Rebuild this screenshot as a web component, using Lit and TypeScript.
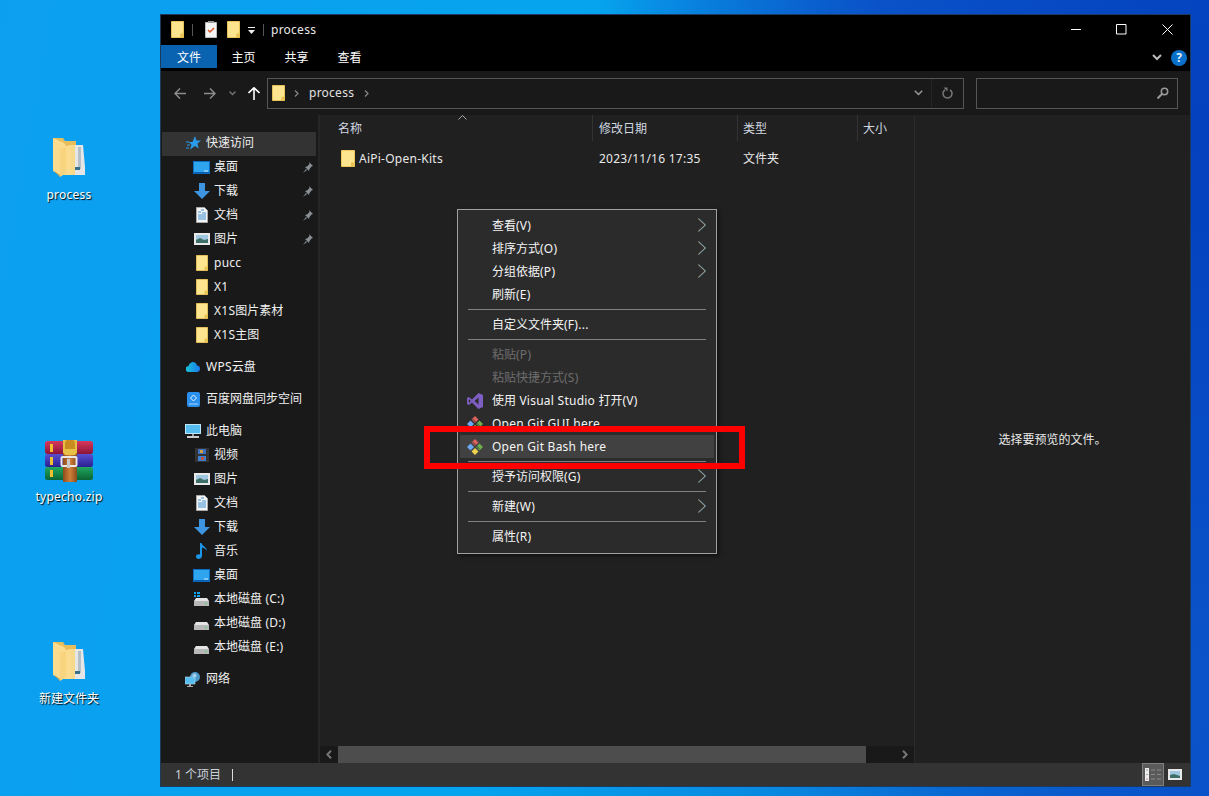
import { LitElement, css, html, svg } from "lit";
import { customElement } from "lit/decorators.js";

// Segoe UI runs a little wider than Noto Sans, so latin runs get some tracking
const t = (text: string) =>
  text
    .split(/([\x00-\x7f]+)/)
    .map((run, i) => (i % 2 ? html`<span class="lat">${run}</span>` : run));

const isLatin = (text: string) => /^[\x00-\x7f]+$/.test(text);

const folder = (w = 13, h = 17) => html`<svg width=${w} height=${h} viewBox="0 0 14 17" preserveAspectRatio="none">
  <path d="M.5.5h13v16H.5z" fill="#fde58f" stroke="#eec85a" />
  <path d="M10 12.5h3.5v4H10z" fill="#e8c14f" />
</svg>`;

const monitor = html`<svg width="17" height="13" viewBox="0 0 17 13">
  <rect width="16" height="12" x=".5" y=".5" fill="#2fa5f0" stroke="#0a6fc4" />
  <path d="M1 11h15v1.5H1z" fill="#0a5fb0" />
  <path d="M11 10h4" stroke="#cdeafb" />
</svg>`;

const download = html`<svg width="16" height="16" viewBox="0 0 16 16">
  <path d="M5 0h6v8h5l-8 8-8-8h5z" fill="#3d94e0" />
</svg>`;

const documentIcon = html`<svg width="12" height="16" viewBox="0 0 12 16">
  <path d="M.5.5h8l3 3v12H.5z" fill="#f4f4f4" stroke="#aaa" />
  <path d="M5 3h3M2 5h3M6 6h4M2 8h8M2 10h8M2 12h8" stroke="#3f8fd0" />
</svg>`;

const picture = html`<svg width="16" height="12" viewBox="0 0 16 12">
  <rect width="16" height="12" fill="#e9e9e9" />
  <rect width="12" height="8" x="2" y="2" fill="#9fc8e0" />
  <path d="M2 7l4-2 4 2 4-1v4H2z" fill="#3f6f68" />
</svg>`;

const pin = html`<svg width="10" height="11" viewBox="0 0 10 11">
  <path d="M6 0l4 4-1.500.6L6.500 7l-.5 2-4-4 2-.5L6.500 2z M3 7l-3 4 4-3z" fill="#8a8f94" />
</svg>`;

const video = html`<svg width="14" height="14" viewBox="0 0 14 14">
  <rect width="14" height="14" fill="#333" />
  <path d="M3 1h8v5H3z" fill="#3d6fc0" />
  <path d="M3 8h8v5H3z" fill="#3d80d0" />
  <path d="M5 2h3v3H5z" fill="#d0a040" />
  <path d="M6 9h3v3H6z" fill="#c05040" />
</svg>`;

const music = html`<svg width="12" height="16" viewBox="0 0 12 16">
  <path d="M4 0h1.500c.5 3 5.500 4 5.500 8-1-2-3-3-5-3.500V13c0 2-2 3-3.500 3S0 15 0 13.500 2 11 4 11.500z" fill="#1b96e8" />
</svg>`;

const drive = (win = false) => html`<svg width="15" height="14" viewBox="0 0 15 14">
  ${win
    ? svg`<path d="M0 0h2v2H0zM3 0h3v2H3zM0 3h2v2H0zM3 3h3v2H3z" fill="#12a5ee" />`
    : ""}
  <path d="M2 6h11l2 3H0z" fill="#e4e4e4" />
  <rect width="15" height="5" y="9" fill="#b8b8b8" />
  <path d="M11 11h2v1h-2z" fill="#4fdc5a" />
</svg>`;

const star = html`<svg width="15" height="14" viewBox="0 0 15 14">
  <path d="M9 0l1.500 4.500H15l-3.500 3 1.200 5L9 10l-5 3.500 1.500-5L2.500 6h4z" fill="#2a9be8" />
  <path d="M0 6h3M1 9h3M0 12h3" stroke="#2a9be8" />
</svg>`;

const cloud = html`<svg width="15" height="10" viewBox="0 0 15 10">
  <defs>
    <linearGradient id="wps" x1="0" x2="1">
      <stop offset="0" stop-color="#17c5d8" />
      <stop offset="1" stop-color="#1a78ea" />
    </linearGradient>
  </defs>
  <path d="M3 10a3 3 0 0 1-.500-6C3.500 1 5.500 0 7 0c2 0 3.500 1.500 4 3.500a3.300 3.300 0 0 1 .5 6.500z" fill="url(#wps)" />
</svg>`;

const baidu = html`<svg width="13" height="15" viewBox="0 0 13 15">
  <rect width="13" height="15" rx="2" fill="#2a90ee" />
  <path d="M6.500 3l3 3-3 3-3-3z" fill="none" stroke="#e6f4ff" />
  <path d="M2 12h9" stroke="#a8d6ff" />
</svg>`;

const pc = html`<svg width="16" height="15" viewBox="0 0 16 15">
  <rect width="16" height="10" fill="#bfe6f8" />
  <rect width="14" height="8" x="1" y="1" fill="#56bdf0" />
  <path d="M7 10h2v2H7z" fill="#999" />
  <path d="M2 12h12v2H2z" fill="#ccc" />
</svg>`;

const network = html`<svg width="16" height="15" viewBox="0 0 16 15">
  <circle cx="10" cy="5" r="5" fill="#4b97c9" />
  <path d="M7 3l3-2 2 3-3 2z" fill="#9fd0ec" />
  <rect width="10" height="7" y="5" fill="#56bdf0" stroke="#b8d8e8" stroke-width=".6" />
  <path d="M4 12h2v2H4zM2 14h6v1H2z" fill="#aaa" />
</svg>`;

const vs = html`<svg width="16" height="16" viewBox="0 0 16 16">
  <path d="M11.500 0L16 2v12l-4.500 2L5 9.500 1.800 12 0 11V5l1.800-1L5 6.500zM11.500 4.500L7.500 8l4 3.500zM1.800 6v4L3.800 8z" fill="#7f5ec4" />
</svg>`;

const git = html`<svg width="16" height="16" viewBox="0 0 16 16">
  <path d="M8 0l3.500 3.500L8 7 4.500 3.500z" fill="#e0605a" />
  <path d="M3.500 4.500L7 8l-3.500 3.500L0 8z" fill="#6da8f2" />
  <path d="M12.500 4.500L16 8l-3.500 3.500L9 8z" fill="#6cb04c" />
  <path d="M8 9l3.500 3.500L8 16l-3.500-3.500z" fill="#f0d050" />
  <path d="M5.500 3l7 7" stroke="#3c3c3c" />
</svg>`;

const submenuArrow = html`<svg class="sub" width="10" height="14" viewBox="0 0 10 14">
  <path d="M1 .5L8 7l-7 6.500" fill="none" stroke="#e8a060" stroke-width=".7" />
  <path d="M1.700 .5L8.700 7l-7 6.500" fill="none" stroke="#70c4f4" stroke-width=".7" />
</svg>`;

const navGroups = [
  [
    { icon: star, label: "快速访问", top: true, active: true },
    { icon: monitor, label: "桌面", pinned: true },
    { icon: download, label: "下载", pinned: true },
    { icon: documentIcon, label: "文档", pinned: true },
    { icon: picture, label: "图片", pinned: true },
    { icon: folder(12, 16), label: "pucc" },
    { icon: folder(12, 16), label: "X1" },
    { icon: folder(12, 16), label: "X1S图片素材" },
    { icon: folder(12, 16), label: "X1S主图" },
  ],
  [{ icon: cloud, label: "WPS云盘", top: true }],
  [{ icon: baidu, label: "百度网盘同步空间", top: true }],
  [
    { icon: pc, label: "此电脑", top: true },
    { icon: video, label: "视频" },
    { icon: picture, label: "图片" },
    { icon: documentIcon, label: "文档" },
    { icon: download, label: "下载" },
    { icon: music, label: "音乐" },
    { icon: monitor, label: "桌面" },
    { icon: drive(true), label: "本地磁盘 (C:)" },
    { icon: drive(), label: "本地磁盘 (D:)" },
    { icon: drive(), label: "本地磁盘 (E:)" },
  ],
  [{ icon: network, label: "网络", top: true }],
];

type MenuEntry =
  | "sep"
  | { label: string; sub?: boolean; off?: boolean; icon?: unknown; on?: boolean };

const menu: MenuEntry[] = [
  { label: "查看(V)", sub: true },
  { label: "排序方式(O)", sub: true },
  { label: "分组依据(P)", sub: true },
  { label: "刷新(E)" },
  "sep",
  { label: "自定义文件夹(F)..." },
  "sep",
  { label: "粘贴(P)", off: true },
  { label: "粘贴快捷方式(S)", off: true },
  { label: "使用 Visual Studio 打开(V)", icon: vs },
  { label: "Open Git GUI here", icon: git },
  { label: "Open Git Bash here", icon: git, on: true },
  "sep",
  { label: "授予访问权限(G)", sub: true },
  "sep",
  { label: "新建(W)", sub: true },
  "sep",
  { label: "属性(R)" },
];

const bigFolder = html`<svg width="34" height="46" viewBox="0 0 34 46">
  <path d="M1 1h10l2 3h11v30H1z" fill="#e8bd5c" />
  <path d="M22 8h9l2 22v8H22z" fill="#e6e6e6" />
  <path d="M26 10h3v22h-3z" fill="#b4c0c4" />
  <path d="M22 30h6v3h-6z" fill="#36708a" />
  <path d="M19 8h4v30h-4z" fill="#f6d98a" />
  <path d="M1 1l11 5 2 3 5-1v30H8l-7-4z" fill="#fbdc8e" />
  <path d="M1 33l7 7V38z" fill="#d8a848" />
  <path d="M8 12v28l6-4V10z" fill="#f9d47e" />
</svg>`;

const rar = html`<svg width="48" height="42" viewBox="0 0 48 42">
  <defs>
    <linearGradient id="rr" x1="0" x2="0" y1="0" y2="1">
      <stop offset="0" stop-color="#d83a5c" />
      <stop offset="1" stop-color="#8c1438" />
    </linearGradient>
    <linearGradient id="rb" x1="0" x2="0" y1="0" y2="1">
      <stop offset="0" stop-color="#5a50d0" />
      <stop offset="1" stop-color="#2a2090" />
    </linearGradient>
    <linearGradient id="rg" x1="0" x2="0" y1="0" y2="1">
      <stop offset="0" stop-color="#20a860" />
      <stop offset="1" stop-color="#0a6434" />
    </linearGradient>
    <linearGradient id="rbelt" x1="0" x2="1">
      <stop offset="0" stop-color="#8c4c1c" />
      <stop offset=".5" stop-color="#d08038" />
      <stop offset="1" stop-color="#8c4c1c" />
    </linearGradient>
  </defs>
  <rect width="48" height="13" y="1" rx="2.500" fill="url(#rr)" />
  <rect width="48" height="13" y="14" rx="2.500" fill="url(#rb)" />
  <rect width="48" height="13" y="27" rx="2.500" fill="url(#rg)" />
  <path d="M5 4h3v8H5zM5 17h3v8H5zM5 30h3v7H5z" fill="#f0c030" />
  <path d="M18 14h14v28H18z" fill="url(#rbelt)" />
  <path d="M18 0h14v13l-2 2H20l-2-2z" fill="#e8c048" />
  <path d="M20 3a5 4 0 0 1 10 0v6H20z" fill="#c88c20" />
  <rect width="15" height="9" x="16.500" y="17" rx="1" fill="none" stroke="#e8e8e8" stroke-width="2" />
  <path d="M22 19h3v9h-3z" fill="#c8c8c8" />
</svg>`;

@customElement("app-root")
export class AppRoot extends LitElement {
  private renderNav() {
    return html`<nav class="nav">
      ${navGroups.map(
        (group) => html`<div class="nav-group">
          ${group.map(
            (item: any) => html`<div
              class="nav-row ${item.top ? "top" : ""} ${item.active ? "active" : ""}"
            >
              <span class="nav-icon">${item.icon}</span>
              <span class="nav-label">${t(item.label)}</span>
              ${item.pinned ? html`<span class="pin">${pin}</span>` : ""}
            </div>`,
          )}
        </div>`,
      )}
    </nav>`;
  }

  private renderMenu() {
    return html`<div class="menu">
      ${menu.map((entry) =>
        entry === "sep"
          ? html`<div class="menu-sep"></div>`
          : html`<div class="menu-item ${entry.off ? "off" : ""} ${entry.on ? "on" : ""}">
              <span class="menu-icon">${entry.icon ?? ""}</span>
              <span class="menu-label ${isLatin(entry.label) ? "plain" : ""}">${t(entry.label)}</span>
              ${entry.sub ? submenuArrow : ""}
            </div>`,
      )}
    </div>`;
  }

  render() {
    return html`
      <div class="desktop">
        <div class="shortcut process">${bigFolder}<span class="cap">${t("process")}</span></div>
        <div class="shortcut zip">${rar}<span class="cap">${t("typecho.zip")}</span></div>
        <div class="shortcut newdir">${bigFolder}<span class="cap">新建文件夹</span></div>

        <div class="window">
          <header class="title">
            ${folder()}
            <i class="qsep"></i>
            <svg class="note" width="12" height="17" viewBox="0 0 12 17">
              <path d="M.5 1.500h11v15H.5z" fill="#f4f4f4" stroke="#bbb" />
              <path d="M3 9l2 2 4-4" fill="none" stroke="#e0552a" stroke-width="1.500" />
              <path d="M3 0h6v2H3z" fill="#999" />
            </svg>
            ${folder()}
            <svg class="qdrop" width="7" height="8" viewBox="0 0 7 8">
              <path d="M0 0h7v1H0z M0 3h7L3.500 7z" fill="#eee" />
            </svg>
            <i class="qsep last"></i>
            <span class="title-text">${t("process")}</span>
            <div class="controls">
              <svg width="11" height="11" viewBox="0 0 11 11"><path d="M1 5.500h10" stroke="#fff" /></svg>
              <svg width="11" height="11" viewBox="0 0 11 11"><path d="M.5.500h9.500v9.500H.5z" fill="none" stroke="#fff" /></svg>
              <svg width="11" height="11" viewBox="0 0 11 11"><path d="M.5.500l10 10M10.500.500l-10 10" stroke="#fff" /></svg>
            </div>
          </header>

          <div class="ribbon">
            <span class="tab file">文件</span>
            <span class="tab">主页</span>
            <span class="tab">共享</span>
            <span class="tab">查看</span>
            <svg class="collapse" width="10" height="7" viewBox="0 0 10 7">
              <path d="M1 1l4 4 4-4" fill="none" stroke="#bbb" stroke-width="2" />
            </svg>
            <span class="help">?</span>
          </div>

          <div class="toolbar">
            <svg class="nav-btn back" width="12" height="11" viewBox="0 0 12 11">
              <path d="M6 .5L1 5.500l5 5M1 5.500h11" fill="none" stroke="#8c8c8c" stroke-width="1.500" />
            </svg>
            <svg class="nav-btn fwd" width="12" height="11" viewBox="0 0 12 11">
              <path d="M6 .5l5 5-5 5M11 5.500H0" fill="none" stroke="#8c8c8c" stroke-width="1.500" />
            </svg>
            <svg class="nav-btn drop" width="7" height="5" viewBox="0 0 7 5">
              <path d="M.5.500l3 3 3-3" fill="none" stroke="#777" stroke-width="1.300" />
            </svg>
            <svg class="nav-btn up" width="12" height="13" viewBox="0 0 12 13">
              <path d="M.5 6L6 .8 11.500 6M6 1v12" fill="none" stroke="#fff" stroke-width="1.600" />
            </svg>
            <div class="address">
              ${folder(13, 16)}
              <svg class="crumb first" width="5" height="7" viewBox="0 0 5 7">
                <path d="M1 .5l3 3-3 3" fill="none" stroke="#888" stroke-width="1.200" />
              </svg>
              <span class="path">${t("process")}</span>
              <svg class="crumb" width="5" height="7" viewBox="0 0 5 7">
                <path d="M1 .5l3 3-3 3" fill="none" stroke="#888" stroke-width="1.200" />
              </svg>
              <svg class="addr-drop" width="9" height="6" viewBox="0 0 9 6">
                <path d="M.8.800l3.700 3.700L8.200.800" fill="none" stroke="#999" stroke-width="1.500" />
              </svg>
              <span class="refresh">
                <svg width="11" height="12" viewBox="0 0 11 12">
                  <path d="M3 2.800a4.500 4.500 0 1 0 5 0" fill="none" stroke="#777" stroke-width="1.500" />
                  <path d="M1.500 0.500h4v4z" fill="#777" />
                </svg>
              </span>
            </div>
            <div class="search">
              <svg width="12" height="12" viewBox="0 0 12 12">
                <circle cx="7.500" cy="4.500" r="3.200" fill="none" stroke="#999" stroke-width="1.500" />
                <path d="M5 7l-4.500 4.500" stroke="#999" stroke-width="2" />
              </svg>
            </div>
          </div>

          <div class="body">
            ${this.renderNav()}
            <main class="content">
              <div class="list">
                <div class="columns">
                  <span class="col name">名称</span>
                  <span class="col date">修改日期</span>
                  <span class="col type">类型</span>
                  <span class="col size">大小</span>
                  <svg class="sort" width="9" height="5" viewBox="0 0 9 5">
                    <path d="M.5 4.500l4-4 4 4" fill="none" stroke="#aaa" />
                  </svg>
                </div>
                <div class="file-row">
                  <span class="file-name">${folder(14, 17)}<span>${t("AiPi-Open-Kits")}</span></span>
                  <span class="file-date">${t("2023/11/16 17:35")}</span>
                  <span class="file-type">文件夹</span>
                </div>
              </div>
              <div class="hscroll">
                <svg width="6" height="9" viewBox="0 0 6 9"><path d="M5 .8L1.300 4.500 5 8.200" fill="none" stroke="#777" stroke-width="2" /></svg>
                <span class="thumb"></span>
                <svg class="right" width="6" height="9" viewBox="0 0 6 9"><path d="M1 .8l3.700 3.700L1 8.200" fill="none" stroke="#777" stroke-width="2" /></svg>
              </div>
            </main>
            <aside class="preview">选择要预览的文件。</aside>
          </div>

          <footer class="status">
            <span class="count">1 个项目</span>
            <i class="caret"></i>
            <span class="view active">
              <svg width="16" height="13" viewBox="0 0 16 13">
                <path d="M0 0h4v13H0z" fill="#eee" />
                <path d="M1.500 1.500h1v1h-1zM1.500 6h1v1h-1z" fill="#555" />
                <path d="M1.500 10.500h1v1h-1z" fill="#a33" />
                <path d="M6 2h4M12 2h4M6 6.500h4M12 6.500h4M6 11h4M12 11h4" stroke="#8c8c8c" />
              </svg>
            </span>
            <span class="view">
              <svg width="14" height="11" viewBox="0 0 14 11">
                <rect width="14" height="11" fill="#e9e9e9" />
                <rect width="10" height="7" x="2" y="2" fill="#9fc8e0" />
                <path d="M2 6l4-1 6 2v2H2z" fill="#3f6f68" />
              </svg>
            </span>
          </footer>
        </div>

        ${this.renderMenu()}
        <div class="callout"></div>
      </div>
    `;
  }

  static styles = css`
    :host {
      display: block;
      font-family: "Noto Sans", "Noto Sans CJK SC", sans-serif;
      font-size: 12px;
    }

    svg {
      display: block;
      flex: none;
    }

    .lat {
      letter-spacing: 0.25px;
    }

    .desktop {
      position: relative;
      width: 1209px;
      height: 796px;
      overflow: hidden;
      background:
        radial-gradient(ellipse 620px 900px at 1209px 130px, #0340bd 0%, #0a52c8 55%, transparent 100%),
        linear-gradient(100deg, #0c9ff0 0%, #06a4ee 45%, #0a7fdc 75%, #0750c8 100%);
    }

    .shortcut {
      position: absolute;
      width: 80px;
      display: flex;
      flex-direction: column;
      align-items: center;
      color: #fff;
      text-shadow: 1px 1px 1px #000;
    }
    .cap {
      margin-top: 4px;
      line-height: 16px;
    }
    .process {
      left: 29px;
      top: 137px;
    }
    .zip {
      left: 29px;
      top: 440px;
    }
    .zip .cap {
      margin-top: 7px;
    }
    .newdir {
      left: 29px;
      top: 641px;
    }

    .window {
      position: absolute;
      left: 161px;
      top: 15px;
      width: 1029px;
      height: 771px;
      display: flex;
      flex-direction: column;
      background: #202020;
      color: #fff;
      box-shadow: 0 0 0 1px #1b3a5c;
    }

    .title {
      height: 29px;
      display: flex;
      align-items: center;
      padding-left: 10px;
      background: #000;
      flex: none;
    }
    .qsep {
      width: 1px;
      height: 12px;
      margin: 0 12px 0 8px;
      background: #555;
    }
    .qsep.last {
      margin: 0 7px 0 8px;
    }
    .note {
      margin-right: 10px;
    }
    .qdrop {
      margin-left: 8px;
      margin-top: 3px;
    }
    .title-text {
      color: #e8e8e8;
    }
    .controls {
      margin-left: auto;
      display: flex;
      gap: 35px;
      padding-right: 17px;
    }

    .ribbon {
      height: 27px;
      display: flex;
      align-items: flex-start;
      padding-right: 3px;
      background: #000;
      flex: none;
    }
    .tab {
      height: 23px;
      line-height: 26px;
      width: 53px;
      text-align: center;
      margin-top: 1px;
    }
    .tab.file {
      width: 56px;
      background: #0a63b1;
    }
    .collapse {
      margin: 10px 9px 0 auto;
    }
    .help {
      width: 16px;
      height: 16px;
      margin-top: 6px;
      border-radius: 50%;
      background: #0a6fc8;
      color: #dfeeff;
      font-weight: 700;
      font-size: 12px;
      line-height: 16px;
      text-align: center;
    }

    .toolbar {
      height: 44px;
      display: flex;
      align-items: center;
      padding-left: 13px;
      background: #191919;
      flex: none;
    }
    .nav-btn.fwd {
      margin-left: 18px;
    }
    .nav-btn.drop {
      margin-left: 13px;
    }
    .nav-btn.up {
      margin-left: 12px;
    }
    .address {
      width: 697px;
      height: 31px;
      margin-left: 7px;
      display: flex;
      align-items: center;
      padding-left: 4px;
      border: 1px solid #555;
      box-sizing: border-box;
      background: #191919;
    }
    .crumb.first {
      margin: 0 10px 0 9px;
    }
    .crumb {
      margin-left: 10px;
    }
    .path {
      color: #e0e0e0;
      padding-bottom: 2px;
    }
    .addr-drop {
      margin-left: auto;
      margin-right: 8px;
    }
    .refresh {
      height: 100%;
      width: 31px;
      display: flex;
      align-items: center;
      justify-content: center;
      border-left: 1px solid #262626;
    }
    .search {
      width: 202px;
      height: 31px;
      margin-left: 12px;
      display: flex;
      align-items: center;
      justify-content: flex-end;
      padding-right: 8px;
      border: 1px solid #555;
      box-sizing: border-box;
    }

    .body {
      flex: 1;
      display: flex;
      min-height: 0;
    }

    .nav {
      width: 157px;
      padding-top: 16px;
      background: #191919;
      border-right: 2px solid #262626;
      flex: none;
      display: flex;
      flex-direction: column;
      gap: 8px;
    }
    .nav-row {
      height: 24px;
      display: flex;
      align-items: center;
      padding-left: 30px;
      position: relative;
      color: #f0f0f0;
    }
    .nav-row.top {
      padding-left: 22px;
    }
    .nav-row.active::before {
      content: "";
      position: absolute;
      inset: 1px 2px -1px 1px;
      background: #333;
    }
    .nav-icon {
      width: 21px;
      margin-right: 2px;
      display: flex;
      justify-content: center;
      position: relative;
    }
    .nav-row.top .nav-icon {
      width: 20px;
      margin-right: 3px;
    }
    .nav-label {
      position: relative;
      white-space: nowrap;
      padding-bottom: 2px;
    }
    .pin {
      position: absolute;
      right: 5px;
      top: 7px;
    }

    .content {
      flex: 1;
      display: flex;
      flex-direction: column;
      min-width: 0;
    }
    .list {
      flex: 1;
    }
    .columns {
      height: 26px;
      position: relative;
      display: flex;
      color: #d0d8e0;
    }
    .col {
      line-height: 28px;
      padding-left: 6px;
      box-sizing: border-box;
      border-right: 1px solid #333;
    }
    .col.name {
      width: 273px;
      padding-left: 18px;
    }
    .col.date {
      width: 145px;
    }
    .col.type {
      width: 120px;
      padding-left: 5px;
    }
    .col.size {
      width: 56px;
      padding-left: 5px;
      border-right: none;
    }
    .sort {
      position: absolute;
      left: 138px;
      top: 0;
    }
    .file-row {
      margin-top: 6px;
      height: 22px;
      display: flex;
      align-items: center;
      color: #e8e8e8;
    }
    .file-name {
      width: 279px;
      padding-left: 21px;
      box-sizing: border-box;
      display: flex;
      align-items: center;
      gap: 4px;
    }
    .file-date {
      width: 144px;
    }
    .file-row svg {
      flex: none;
    }

    .hscroll {
      height: 17px;
      display: flex;
      align-items: center;
      padding-left: 6px;
      background: #191919;
      flex: none;
    }
    .thumb {
      width: 528px;
      height: 100%;
      margin-left: 6px;
      background: #4d4d4d;
    }
    .hscroll .right {
      margin-left: 36px;
    }

    .preview {
      width: 276px;
      flex: none;
      border-left: 1px solid #2b2b2b;
      box-sizing: border-box;
      display: flex;
      align-items: center;
      justify-content: center;
      color: #e8e8e8;
    }

    .status {
      height: 23px;
      display: flex;
      align-items: center;
      padding-left: 14px;
      background: #333;
      color: #c8d0d8;
      flex: none;
    }
    .count {
      padding-bottom: 2px;
    }
    .caret {
      width: 1px;
      height: 12px;
      margin-left: 11px;
      background: #ddd;
    }
    .view {
      width: 22px;
      height: 23px;
      display: flex;
      align-items: center;
      justify-content: center;
      box-sizing: border-box;
    }
    .view.active {
      margin-left: auto;
      background: #5a5a5a;
      border: 1px solid #808080;
    }
    .view:last-child {
      margin-right: 4px;
    }

    .menu {
      position: absolute;
      left: 457px;
      top: 209px;
      width: 260px;
      box-sizing: border-box;
      padding: 4px 2px 5px;
      background: #2b2b2b;
      border: 1px solid #a0a0a0;
      box-shadow: 2px 2px 4px rgba(0, 0, 0, 0.5);
      color: #f4f4f4;
    }
    .menu-item {
      height: 23px;
      display: flex;
      align-items: center;
      position: relative;
    }
    .menu-item.on {
      background: #414141;
    }
    .menu-item.off {
      color: #6d6d6d;
    }
    .menu-icon {
      width: 32px;
      padding-left: 7px;
      box-sizing: border-box;
      flex: none;
    }
    .menu-label {
      white-space: nowrap;
      padding-bottom: 2px;
    }
    .menu-label.plain {
      padding-bottom: 0;
    }
    .sub {
      position: absolute;
      right: 7px;
      top: 4px;
    }
    .menu-sep {
      height: 1px;
      margin: 3px 8px;
      background: #808080;
    }

    .callout {
      position: absolute;
      left: 424px;
      top: 426px;
      width: 321px;
      height: 43px;
      box-sizing: border-box;
      border: 6px solid #f00;
    }
  `;
}

declare global {
  interface HTMLElementTagNameMap {
    "app-root": AppRoot;
  }
}
